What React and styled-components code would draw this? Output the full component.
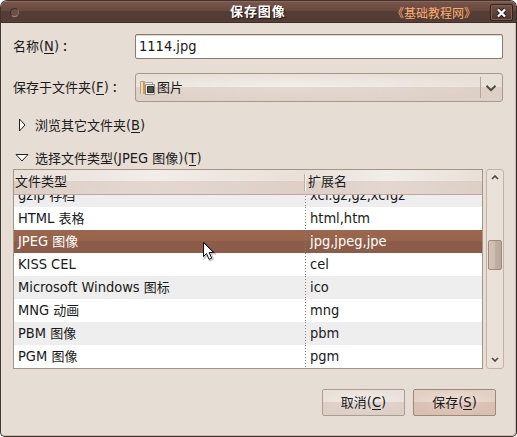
import React from 'react';
import styled, { createGlobalStyle, css } from 'styled-components';

const GlobalStyle = createGlobalStyle`
  * { box-sizing: border-box; }
  body {
    margin: 0;
    background: #fff;
    overflow: hidden;
    font: 14.5px/20px "DejaVu Sans Condensed", "DejaVu Sans", "Noto Sans CJK SC", sans-serif;
    color: #1a1a1a;
  }
`;

const Han = styled.span`
  font-family: "Noto Sans CJK SC", sans-serif;
  font-size: 13px;
  line-height: 1;
`;

const Window = styled.main`
  position: relative;
  width: 517px;
  height: 437px;
  display: flex;
  flex-direction: column;
  background: #e6ddd4;
  border: 1px solid #3f3330;
  border-right-color: #31292a;
  border-radius: 7px 7px 5px 5px;
  box-shadow: inset -1px -1px #c9b9a8, inset 1px 0 #efe8df;
  overflow: hidden;
`;

const TitleBar = styled.header`
  flex: none;
  height: 22px;
  display: grid;
  grid-template-columns: 229px 166px 1fr auto;
  align-items: center;
  padding-right: 3px;
  background: linear-gradient(#8a675b 0 1px, #795449 1px, #67483f 10px, #553e36 10px, #523b34 20px, #60483f 21px, #3a2d29 21px);
`;

const MenuDot = styled.span`
  width: 9px;
  height: 9px;
  margin-left: 9px;
  border: 1px solid #3c2b27;
  border-bottom-color: #a38b82;
  border-right-color: #8b7268;
  border-radius: 50%;
  background: #6c5047;
`;

const Title = styled.h1`
  margin: -2px 0 0;
  font-family: "Noto Sans CJK SC", sans-serif;
  font-size: 13px;
  line-height: 20px;
  font-weight: 700;
  letter-spacing: 0.9px;
  color: #fff;
  text-shadow: 1px 1px 1px #1f1512;
`;

const Site = styled.span`
  display: flex;
  margin: 2px 0 0 2px;
  white-space: nowrap;
  font-size: 12px;
  line-height: 18px;
  color: #ffae74;
  font-family: "Noto Sans CJK SC", sans-serif;
  font-feature-settings: "halt";
`;

const CloseButton = styled.button`
  width: 23px;
  height: 17px;
  padding: 0;
  margin-top: 1px;
  display: grid;
  place-items: center;
  border: 1px solid #33211c;
  border-radius: 2px;
  background: linear-gradient(#725247, #4c372f);
  box-shadow: inset 0 0 0 1px #7e6257;
`;

const Body = styled.div`
  flex: 1;
  display: flex;
  flex-direction: column;
  padding: 11px 12px 0;
`;

const Field = styled.div`
  display: grid;
  grid-template-columns: 122px 368px;
  align-items: center;
  margin-bottom: ${(p) => p.$gap}px;
`;

const Label = styled.label`
  display: flex;
  align-items: baseline;
  white-space: nowrap;
  padding-bottom: 2px;
`;

const Colon = styled.span`
  font-family: "Noto Sans CJK JP", sans-serif;
  font-size: 12px;
  line-height: 12px;
  font-weight: 500;
  align-self: center;
  margin-top: 3px;
`;

const Mnemonic = styled.span`
  box-shadow: inset 0 -1px #1a1a1a;
  display: inline-block;
  height: 15px;
  line-height: 15px;
`;

const Entry = styled.input`
  width: 368px;
  height: 25px;
  padding: 0 3px 1px;
  font: inherit;
  color: inherit;
  border: 1px solid #8b7a66;
  border-radius: 2px;
  background: #fff;
  box-shadow: inset 0 1px #ddd8d2;
  outline: 0;
`;

const Combo = styled.div`
  height: 29px;
  display: flex;
  align-items: center;
  padding-left: 3px;
  border: 1px solid #a8988a;
  border-radius: 3px;
  background:
    linear-gradient(transparent 13px, rgba(199, 176, 164, 0.36) 13px, rgba(199, 176, 164, 0.3)),
    radial-gradient(ellipse at 42% 50%, #f4f0ec, #e8dfd7 75%);
`;

const ComboText = styled.span`
  flex: 1;
  margin-left: 1px;
  padding-bottom: 2px;
`;

const ComboArrow = styled.span`
  width: 22px;
  height: 21px;
  display: grid;
  place-items: center;
  border-left: 1px solid #b5a69a;
  padding-right: 2px;
`;

const Expander = styled.div`
  height: 20px;
  display: flex;
  align-items: center;
  gap: 6px;
  padding-left: 2px;
  margin-bottom: ${(p) => p.$gap}px;
  white-space: nowrap;
`;

const ExpanderText = styled.span`
  padding-bottom: 1px;
`;

const ListArea = styled.div`
  display: flex;
  gap: 3px;
  height: 200px;
`;

const Table = styled.div`
  width: 470px;
  display: flex;
  flex-direction: column;
  border: 1px solid #a59587;
  background: #fff;
`;

const HeaderRow = styled.div`
  flex: none;
  height: 25px;
  display: grid;
  grid-template-columns: 290px 1fr;
  align-items: center;
  border-bottom: 1px solid #bca99a;
  background:
    linear-gradient(transparent 11px, rgba(199, 176, 164, 0.36) 11px, rgba(199, 176, 164, 0.35)),
    linear-gradient(90deg, #e9e0d8, #f2ede8 30%, #e9e0d8 62%, #f2ede8 80%, #e9e0d8);
`;

const HeaderCell = styled.span`
  height: 17px;
  line-height: 15px;
  padding-left: 1px;
  & + & {
    border-left: 1px solid #bdaea2;
    box-shadow: inset 1px 0 #f8f5f2;
    padding-left: 3px;
  }
`;

const Rows = styled.div`
  height: 173px;
  display: flex;
  flex-direction: column;
  justify-content: flex-end;
  overflow: hidden;
`;

const Row = styled.div`
  flex: none;
  height: 23px;
  display: grid;
  grid-template-columns: 291px 1fr;
  line-height: 22px;
  background: ${(p) => (p.$shade ? '#eeeeee' : '#ffffff')};
  ${(p) => p.$selected && css`
    color: #fff;
    background: linear-gradient(#9c664d, #97634c 11px, #8d5c48 11px, #8c5c48);
  `}
`;

const Cell = styled.span`
  padding-left: 4px;
  white-space: nowrap;
  & + & {
    padding-left: 5px;
    background: repeating-linear-gradient(#8a8580 0 1px, transparent 1px 3px) 0 0 / 1px 100% no-repeat;
  }
`;

const Scrollbar = styled.div`
  width: 18px;
  height: 200px;
  display: grid;
  grid-template-rows: 70px 30px 1fr;
  justify-items: center;
  border: 1px solid #c5b3a2;
  border-radius: 3px;
  background: #e9e1da;
`;

const ArrowSlot = styled.span`
  display: flex;
  padding: 5px 0 6px;
  align-items: ${(p) => (p.$end ? 'flex-end' : 'flex-start')};
`;

const Thumb = styled.span`
  width: 14px;
  height: 30px;
  border: 1px solid #9d8a7b;
  border-radius: 2px;
  background: linear-gradient(90deg, #d2c3b6, #cbbcaf 50%, #bfaea1 50%, #b9a89c);
`;

const Actions = styled.div`
  display: flex;
  justify-content: flex-end;
  gap: 8px;
  margin: 20px 8px 0 0;
`;

const ActionButton = styled.button`
  width: 83px;
  height: 27px;
  padding: 0 0 1px;
  font: inherit;
  color: inherit;
  border: 1px solid ${(p) => (p.$primary ? '#a08779' : '#ad9d90')};
  border-radius: 2px;
  background:
    linear-gradient(transparent 12px, ${(p) => (p.$primary ? 'rgba(195,150,130,.28)' : 'rgba(199,176,164,.36)')} 12px),
    ${(p) => (p.$primary
      ? 'radial-gradient(ellipse at center, #eee0d8, #e2cfc3 75%)'
      : 'radial-gradient(ellipse at center, #f2eeea, #e9e0d9 75%)')};
`;

const Pointer = styled.svg`
  position: absolute;
  left: 202px;
  top: 241px;
`;

const files = [
  ['gzip 存档', 'xcf.gz,gz,xcfgz'],
  ['HTML 表格', 'html,htm'],
  ['JPEG 图像', 'jpg,jpeg,jpe'],
  ['KISS CEL', 'cel'],
  ['Microsoft Windows 图标', 'ico'],
  ['MNG 动画', 'mng'],
  ['PBM 图像', 'pbm'],
  ['PGM 图像', 'pgm'],
];

function Mixed({ children }) {
  return children
    .split(/([\u4e00-\u9fff]+)/)
    .filter(Boolean)
    .map((part, i) => (/[\u4e00-\u9fff]/.test(part) ? <Han key={i}>{part}</Han> : part));
}

function Key({ letter }) {
  return <span>(<Mnemonic>{letter}</Mnemonic>)</span>;
}

function Chevron({ up, width = 8, height = 5, stroke = 1.6 }) {
  return (
    <svg width={width} height={height} viewBox="0 0 8 5" fill="none" stroke="#4b4540" strokeWidth={stroke}>
      <path d={up ? 'M1 4 4 1 7 4' : 'M1 1 4 4 7 1'} />
    </svg>
  );
}

function FolderIcon() {
  return (
    <svg width="17" height="16" viewBox="0 0 17 16">
      <path d="M1.5 1.5h4l1 1h7v11h-12z" fill="#f8f6f3" stroke="#aaa199" />
      <path d="M2 2h4v12H2z" fill="#f7d9b0" />
      <path d="M4 2h2v12H4z" fill="#dc9448" />
      <path d="M6.5 4.5h9v10h-9z" fill="#f3f3f2" stroke="#8c8986" />
      <path d="M8.500 6.500h6v6h-6z" fill="#50534f" stroke="#252725" />
    </svg>
  );
}

export default function App() {
  return (
    <>
      <GlobalStyle />
      <Window>
        <TitleBar>
          <MenuDot />
          <Title>保存图像</Title>
          <Site>《基础教程网》</Site>
          <CloseButton aria-label="关闭">
            <svg width="11" height="10" viewBox="0 0 11 10" fill="none">
              <path d="m2 1.5 7 7m0-7-7 7" stroke="#291b17" strokeWidth="4" />
              <path d="m2 1.5 7 7m0-7-7 7" stroke="#fff" strokeWidth="2.4" />
            </svg>
          </CloseButton>
        </TitleBar>
        <Body>
          <Field $gap={14}>
            <Label htmlFor="name"><Mixed>名称</Mixed><Key letter="N" /><Colon>：</Colon></Label>
            <Entry id="name" defaultValue="1114.jpg" />
          </Field>
          <Field $gap={13}>
            <Label><Mixed>保存于文件夹</Mixed><Key letter="F" /><Colon>：</Colon></Label>
            <Combo>
              <FolderIcon />
              <ComboText><Mixed>图片</Mixed></ComboText>
              <ComboArrow><Chevron width={12} height={8} stroke={1.2} /></ComboArrow>
            </Combo>
          </Field>
          <Expander $gap={13}>
            <svg width="14" height="14" viewBox="0 0 14 14">
              <path d="M4.5 1 10 7 4.5 13z" fill="#fff" stroke="#25211e" />
            </svg>
            <ExpanderText><Mixed>浏览其它文件夹</Mixed><Key letter="B" /></ExpanderText>
          </Expander>
          <Expander $gap={1}>
            <svg width="14" height="14" viewBox="0 0 14 14">
              <path d="M1 3.5h12L7 10z" fill="#fff" stroke="#25211e" />
            </svg>
            <ExpanderText><Mixed>选择文件类型(JPEG 图像)</Mixed><Key letter="T" /></ExpanderText>
          </Expander>
          <ListArea>
            <Table>
              <HeaderRow>
                <HeaderCell><Mixed>文件类型</Mixed></HeaderCell>
                <HeaderCell><Mixed>扩展名</Mixed></HeaderCell>
              </HeaderRow>
              <Rows>
                {files.map(([name, ext], i) => (
                  <Row key={name} $shade={i % 2 === 0} $selected={i === 2}>
                    <Cell><Mixed>{name}</Mixed></Cell>
                    <Cell>{ext}</Cell>
                  </Row>
                ))}
              </Rows>
            </Table>
            <Scrollbar>
              <ArrowSlot><Chevron up /></ArrowSlot>
              <Thumb />
              <ArrowSlot $end><Chevron /></ArrowSlot>
            </Scrollbar>
          </ListArea>
          <Actions>
            <ActionButton><Mixed>取消</Mixed><Key letter="C" /></ActionButton>
            <ActionButton $primary><Mixed>保存</Mixed><Key letter="S" /></ActionButton>
          </Actions>
        </Body>
        <Pointer width="13" height="20" viewBox="0 0 13 20">
          <path d="M1.5 1.5v14l3-3 2.6 5.5 2.4-1.2L7 11.5h4.5z" fill="none" stroke="#0003" strokeWidth="2.5" />
          <path d="M.5.5v14l3-3 2.6 5.8 2.6-1.2-2.6-5.6h4.4z" fill="#fff" stroke="#111" />
        </Pointer>
      </Window>
    </>
  );
}
